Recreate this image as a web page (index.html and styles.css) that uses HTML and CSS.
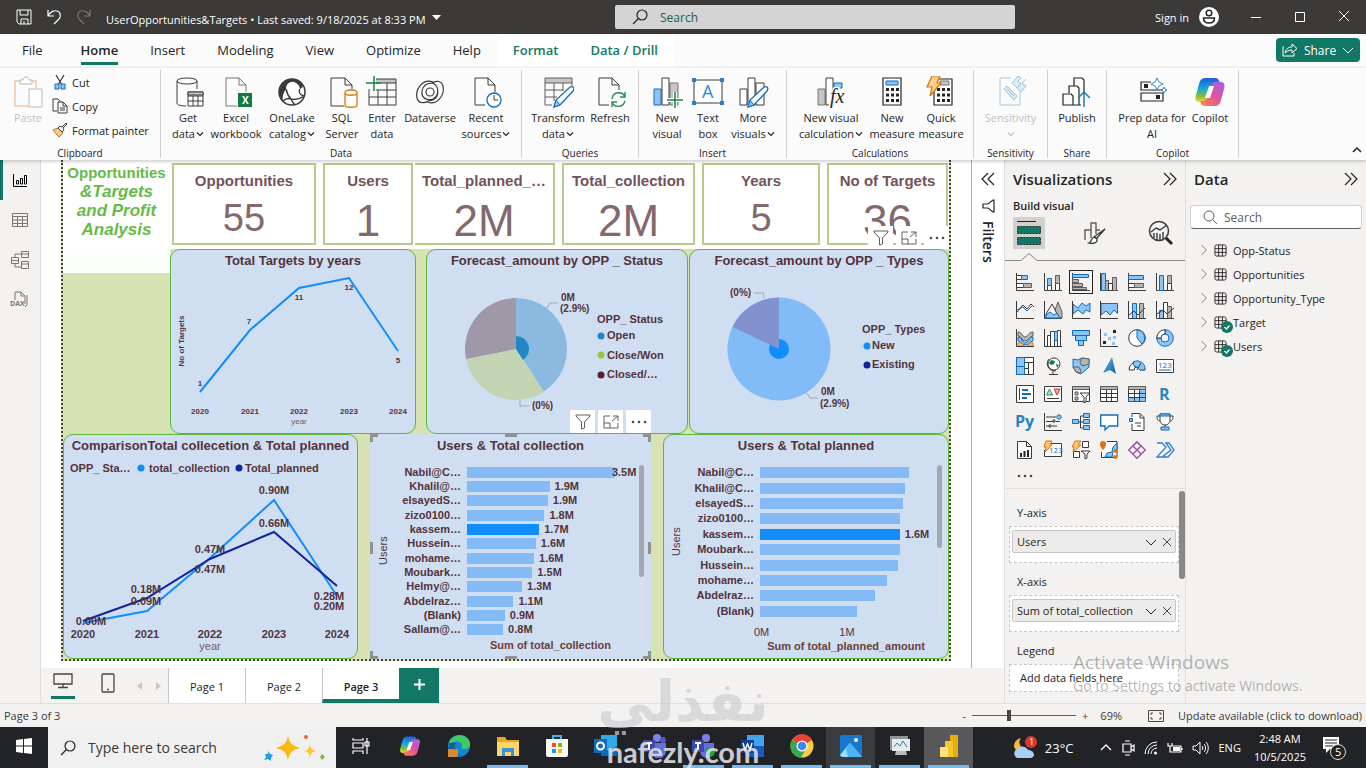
FILE: index.html
```
<!DOCTYPE html>
<html lang="en">
<head>
    <meta charset="UTF-8">
    <meta name="viewport" content="width=device-width, initial-scale=1.0">
    <title>UserOpportunities&amp;Targets</title>
    <link rel="stylesheet" href="styles.css">
</head>
<body>

<!-- shared icons -->
<svg class="symbols" aria-hidden="true">
    <symbol id="chev" viewBox="0 0 8 8"><path d="M1 2.500l3 3 3-3" fill="none" stroke="currentColor" stroke-width="1.200"/></symbol>
    <symbol id="chev-thin" viewBox="0 0 12 12"><path d="M1 4l5 5 5-5" fill="none" stroke="currentColor"/></symbol>
    <symbol id="chev-right" viewBox="0 0 10 14"><path d="M2 1l6 6-6 6" fill="none" stroke="#605e5c"/></symbol>
    <symbol id="double-right" viewBox="0 0 14 14"><path d="M1 1l6 6-6 6M7 1l6 6-6 6" fill="none" stroke="#252423" stroke-width="1.200"/></symbol>
    <symbol id="double-left" viewBox="0 0 14 14"><path d="M7 1L1 7l6 6M13 1L7 7l6 6" fill="none" stroke="#252423" stroke-width="1.200"/></symbol>
    <symbol id="table" viewBox="0 0 14 14"><path d="M3 1h8a2 2 0 012 2v8a2 2 0 01-2 2H3a2 2 0 01-2-2V3a2 2 0 012-2zM5 1v12M9 1v12M1 5h12M1 9h12" fill="none" stroke="#252423"/></symbol>
    <symbol id="check" viewBox="0 0 12 12"><circle cx="6" cy="6" r="6" fill="#117865"/><path d="M3.500 6l2 2 3-3.500" fill="none" stroke="#fff" stroke-width="1.300"/></symbol>
    <symbol id="filter" viewBox="0 0 16 16"><path d="M1 1h14v1L9.500 8v6l-3 1V8L1 2z" fill="none" stroke="#605e5c"/></symbol>
    <symbol id="focus" viewBox="0 0 16 14"><path d="M7 1H1v12h14V8M1 8h6v5M10 1h5v5M15 1L9 6" fill="none" stroke="#605e5c"/></symbol>
    <symbol id="dots" viewBox="0 0 16 4"><circle cx="2" cy="2" r="1.300" fill="#484644"/><circle cx="8" cy="2" r="1.300" fill="#484644"/><circle cx="14" cy="2" r="1.300" fill="#484644"/></symbol>
    <symbol id="copilot" viewBox="0 0 32 32">
        <path d="M12 2h9c3 0 4 2 5 5h-3c-3 0-4 2-5 5l-3 9c-1 3-2 5-5 5H5c-4 0-4-4-3-7l3-11c1-4 3-6 7-6z" fill="url(#cp1)"/>
        <path d="M20 30h-9c-3 0-4-2-5-5h3c3 0 4-2 5-5l3-9c1-3 2-5 5-5h5c4 0 4 4 3 7l-3 11c-1 4-3 6-7 6z" fill="url(#cp2)"/>
        <path d="M15 10h5l-4 12h-5z" fill="#fff"/>
    </symbol>
    <defs>
        <linearGradient id="cp1" x1="0" y1="0" x2="0" y2="1"><stop offset="0" stop-color="#1b5fd9"/><stop offset=".45" stop-color="#18a8d8"/><stop offset=".75" stop-color="#7fbf3d"/><stop offset="1" stop-color="#ffd02f"/></linearGradient>
        <linearGradient id="cp2" x1="1" y1="0" x2="0" y2="1"><stop offset="0" stop-color="#a15cf0"/><stop offset=".5" stop-color="#e0559a"/><stop offset="1" stop-color="#ff8a3c"/></linearGradient>
        <linearGradient id="arrowfill" x1="0" y1="0" x2="1" y2="1"><stop offset="0" stop-color="#5ec2ea"/><stop offset="1" stop-color="#0f5c9c"/></linearGradient>
    </defs>
</svg>

<div class="app">

    <!-- title bar -->
    <header class="titlebar">
        <div class="titlebar-left">
            <button class="tool" aria-label="Save"><svg width="16" height="16" viewBox="0 0 16 16"><path d="M1 1h14v14H3l-2-2zM4 1v5h8V1M5 15v-5h7v5M8 12v3" fill="none" stroke="#fff"/></svg></button>
            <button class="tool" aria-label="Undo"><svg width="16" height="16" viewBox="0 0 16 16"><path d="M2 1v6h6M2 7c2-4 6-6 9-5 4 1 4 6 2 8l-5 5" fill="none" stroke="#fff" stroke-width="1.200"/></svg></button>
            <button class="tool" aria-label="Redo"><svg width="16" height="16" viewBox="0 0 16 16"><path d="M14 1v6H8M14 7c-2-4-6-6-9-5-4 1-4 6-2 8l5 5" fill="none" stroke="#797775" stroke-width="1.200"/></svg></button>
            <button class="file-name">UserOpportunities&amp;Targets • Last saved: 9/18/2025 at 8:33 PM <svg width="9" height="6" viewBox="0 0 9 6"><path d="M0 0h9L4.500 5z" fill="#fff"/></svg></button>
        </div>
        <label class="title-search">
            <svg width="16" height="16" viewBox="0 0 16 16"><circle cx="10" cy="6" r="5" fill="none" stroke="#252423" stroke-width="1.200"/><path d="M6.500 9.500L1 15" stroke="#252423" stroke-width="1.300"/></svg>
            <input type="text" placeholder="Search" aria-label="Search">
        </label>
        <div class="titlebar-right">
            <button class="sign-in">Sign in
                <svg width="20" height="20" viewBox="0 0 20 20"><circle cx="10" cy="10" r="10" fill="#fff"/><circle cx="10" cy="6" r="2.800" fill="none" stroke="#252423" stroke-width="1.500"/><path d="M4.500 11h11c0 3-2 5-5.500 5s-5.500-2-5.500-5z" fill="none" stroke="#252423" stroke-width="1.500"/></svg>
            </button>
            <button class="win-button" aria-label="Minimize"><svg width="10" height="10" viewBox="0 0 10 10"><path d="M0 5.500h10" stroke="#fff"/></svg></button>
            <button class="win-button" aria-label="Maximize"><svg width="10" height="10" viewBox="0 0 10 10"><path d="M.5.5h9v9h-9z" fill="none" stroke="#fff"/></svg></button>
            <button class="win-button" aria-label="Close"><svg width="12" height="12" viewBox="0 0 12 12"><path d="M1 1l10 10M11 1L1 11" stroke="#fff"/></svg></button>
        </div>
    </header>

    <!-- ribbon tabs -->
    <nav class="tabs">
        <a class="tab tab-file" href="#">File</a>
        <a class="tab active" href="#">Home</a>
        <a class="tab" href="#">Insert</a>
        <a class="tab" href="#">Modeling</a>
        <a class="tab" href="#">View</a>
        <a class="tab" href="#">Optimize</a>
        <a class="tab" href="#">Help</a>
        <a class="tab context" href="#">Format</a>
        <a class="tab context" href="#">Data / Drill</a>
        <button class="share"><svg width="16" height="14" viewBox="0 0 16 14"><path d="M2 4H1v9h11v-3M3 10c1-4 3-6 7-6V1l5 4.500L10 10V7c-3 0-5 1-7 3z" fill="none" stroke="#fff"/></svg>Share<svg width="12" height="12"><use href="#chev-thin"/></svg></button>
    </nav>

    <!-- ribbon -->
    <div class="ribbon">
        <section class="group group-clipboard">
            <div class="group-items">
                <button class="rb disabled"><svg width="32" height="32" viewBox="0 0 32 32"><path d="M8 5H3v25h14M20 5h4v7" fill="none" stroke="#f3c9a0" stroke-width="1.500"/><path d="M8 8V4h3c0-4 6-4 6 0h3v4z M17 13h13v18H17z" fill="#fdfdfd" stroke="#bcbab8"/></svg><span>Paste</span></button>
                <div class="rb-list">
                    <button class="rb-row"><svg width="16" height="16" viewBox="0 0 16 16"><path d="M4 1l6 10M12 1L6 11" stroke="#3b3a39" stroke-width="1.300"/><path d="M3 10h4v5H3zM9 10h4v5H9z" fill="#8cc4f5" stroke="#0f6cbd"/></svg>Cut</button>
                    <button class="rb-row"><svg width="16" height="16" viewBox="0 0 16 16"><path d="M5 13H1V1h5l3 3M6 4h5l4 4v7H6zM11 4v4h4M8 10h5M8 12h5" fill="none" stroke="#3b3a39"/></svg>Copy</button>
                    <button class="rb-row"><svg width="16" height="16" viewBox="0 0 16 16"><path d="M1 8l5-2 5 5-4 4z" fill="#f9c88a" stroke="#c8690c"/><path d="M6 6l2-2 2 1 4-4 1 1-4 4 1 2-2 2z" fill="#fff" stroke="#3b3a39"/></svg>Format painter</button>
                </div>
            </div>
            <h2>Clipboard</h2>
        </section>

        <section class="group group-data">
            <div class="group-items">
                <button class="rb"><svg width="32" height="32" viewBox="0 0 32 32"><path d="M5 5c0-4 20-4 20 0v8M5 5c0 4 20 4 20 0M5 5v22c0 2 4 3 9 3" fill="none" stroke="#3b3a39"/><path d="M16 16h15v14H16zM16 20h15M16 25h15M21 20v10M26 20v10" fill="#fff" stroke="#3b3a39"/><path d="M16 16h15v3H16z" fill="#c8c6c4" stroke="#3b3a39"/></svg><span>Get<br>data<svg class="ch"><use href="#chev"/></svg></span></button>
                <button class="rb"><svg width="32" height="32" viewBox="0 0 32 32"><path d="M17 30H6V2h13l7 7v7M19 2v7h7" fill="none" stroke="#797775"/><path d="M18 17h14v14H18z" fill="#107c41"/><text x="22" y="28" font-size="10" font-weight="700" fill="#fff">X</text></svg><span>Excel workbook</span></button>
                <button class="rb"><svg width="32" height="32" viewBox="0 0 32 32"><circle cx="16" cy="16" r="13" fill="#fff" stroke="#3b3a39" stroke-width="1.500"/><path d="M16 3A13 13 0 007 25c-1-4 0-8 3-12 0-5 4-8 8-7 3 1 6 4 6 7 2-1 3-2 3-4A13 13 0 0016 3z" fill="#3b3a39"/><path d="M7 25c2-2 5-3 8-2 5 1 9 0 13-3M10 13c1 5 3 8 5 10M24 13c-2 3 0 6 4 7M15 23c1 2 2 4 4 6" fill="none" stroke="#3b3a39" stroke-width="1.400"/></svg><span>OneLake catalog<svg class="ch"><use href="#chev"/></svg></span></button>
                <button class="rb"><svg width="32" height="32" viewBox="0 0 32 32"><path d="M18 30H5V2h14l7 7v4M19 2v7h7" fill="none" stroke="#3b3a39"/><path d="M19 17c0-4 12-4 12 0v12c0 3-12 3-12 0zM19 17c0 3 12 3 12 0" fill="#fff" stroke="#d8760f" stroke-width="1.300"/></svg><span>SQL Server</span></button>
                <button class="rb"><svg width="32" height="32" viewBox="0 0 32 32"><path d="M10 3h20v4H10z" fill="#c8c6c4"/><path d="M10 3h20v26H3V13M10 7h20M10 14h20M3 21h27M12 14v15M21 7v22" fill="none" stroke="#3b3a39"/><path d="M8 0v15M0 7h15" stroke="#10893e" stroke-width="1.500"/></svg><span>Enter data</span></button>
                <button class="rb"><svg width="32" height="32" viewBox="0 0 32 32"><path d="M19 6C9 2 1 13 3 22c1 5 7 6 11 3M13 26c10 4 18-7 16-16-1-5-7-6-11-3" fill="none" stroke="#3b3a39" stroke-width="1.200"/><circle cx="16" cy="16" r="4" fill="none" stroke="#3b3a39" stroke-width="1.200"/><path d="M18 7c7 2 8 12 1 16-6 2-12-1-11-8 1-5 4-8 10-8M14 25c5 0 9-3 10-8" fill="none" stroke="#3b3a39" stroke-width="1.200"/></svg><span>Dataverse</span></button>
                <button class="rb"><svg width="32" height="32" viewBox="0 0 32 32"><path d="M15 29H5V2h13l7 7v7M18 2v7h7" fill="none" stroke="#3b3a39"/><circle cx="24" cy="24" r="7" fill="#fff" stroke="#0f6cbd" stroke-width="1.300"/><path d="M24 19v5h4" fill="none" stroke="#3b3a39"/></svg><span>Recent sources<svg class="ch"><use href="#chev"/></svg></span></button>
            </div>
            <h2>Data</h2>
        </section>

        <section class="group group-queries">
            <div class="group-items">
                <button class="rb"><svg width="32" height="32" viewBox="0 0 32 32"><path d="M3 2h27v5H3z" fill="#c8c6c4"/><path d="M10 29H3V2h27v8M3 7h27M3 14h18M3 21h12M12 7v18M21 7v8" fill="none" stroke="#605e5c"/><path d="M12 31l2-7 14-13c3-1 5 1 3 4L18 29z" fill="#fff" stroke="#0f6cbd" stroke-width="1.300"/><path d="M12 31l2-7 4 5z" fill="#8cc4f5" stroke="#0f6cbd"/></svg><span>Transform data<svg class="ch"><use href="#chev"/></svg></span></button>
                <button class="rb"><svg width="32" height="32" viewBox="0 0 32 32"><path d="M15 29H5V2h13l7 7v5M18 2v7h7" fill="none" stroke="#3b3a39"/><path d="M18 23c1-8 11-8 13-2M31 16v5h-5M31 25c-2 7-11 7-13 1M18 31v-5h5" fill="none" stroke="#2e8b57" stroke-width="1.400"/></svg><span>Refresh</span></button>
            </div>
            <h2>Queries</h2>
        </section>

        <section class="group group-insert">
            <div class="group-items">
                <button class="rb"><svg width="32" height="32" viewBox="0 0 32 32"><path d="M3 13h7v16H3z" fill="#8cc4f5" stroke="#0f6cbd"/><path d="M19 7h8v22h-8z" fill="#c8c6c4" stroke="#797775"/><path d="M11 2h7v27h-7z" fill="#fff" stroke="#3b3a39"/><path d="M24 16v16M16 24h16" stroke="#fff" stroke-width="4"/><path d="M24 16v16M16 24h16" stroke="#10893e" stroke-width="1.500"/></svg><span>New visual</span></button>
                <button class="rb"><svg width="32" height="32" viewBox="0 0 32 32"><path d="M2 4h28v23H2z" fill="#fff" stroke="#3b3a39"/><path d="M0 2h4v4H0zM28 2h4v4h-4zM0 25h4v4H0zM28 25h4v4h-4z" fill="#2b7cd3"/><text x="10" y="22" font-size="18" fill="#2b88d8">A</text></svg><span>Text box</span></button>
                <button class="rb"><svg width="32" height="32" viewBox="0 0 32 32"><path d="M3 13h7v16H3zM19 7h8v22h-8zM11 2h7v27h-7z" fill="#fff" stroke="#3b3a39"/><path d="M11 31l2-7 14-13c3-1 5 1 3 4L17 29z" fill="#fff" stroke="#0f6cbd" stroke-width="1.300"/><path d="M11 31l2-7 4 5z" fill="#8cc4f5" stroke="#0f6cbd"/></svg><span>More visuals<svg class="ch"><use href="#chev"/></svg></span></button>
            </div>
            <h2>Insert</h2>
        </section>

        <section class="group group-calc">
            <div class="group-items">
                <button class="rb"><svg width="32" height="32" viewBox="0 0 32 32"><path d="M3 13h7v16H3z" fill="#c8c6c4" stroke="#797775"/><path d="M19 7h8v5h-8z" fill="#8cc4f5" stroke="#0f6cbd"/><path d="M11 2h7v27h-7z" fill="#fff" stroke="#3b3a39"/><text class="fx" x="15" y="27" font-size="20" fill="#252423" stroke="#fdfdfd" stroke-width="3" paint-order="stroke">fx</text></svg><span>New visual calculation<svg class="ch"><use href="#chev"/></svg></span></button>
                <button class="rb"><svg width="32" height="32" viewBox="0 0 32 32"><path d="M7 2h18v27H7z" fill="#fff" stroke="#252423" stroke-width="1.200"/><path d="M10 5h12v4H10z" fill="#8cc4f5" stroke="#0f6cbd"/><path d="M10 13.500h13M10 19h13M10 24.500h13" stroke="#252423" stroke-width="3" stroke-dasharray="3 2"/></svg><span>New measure</span></button>
                <button class="rb"><svg width="32" height="32" viewBox="0 0 32 32"><path d="M9 3h18v26H9z" fill="#fff" stroke="#252423" stroke-width="1.200"/><path d="M15 5h9v4h-9z" fill="#c8c6c4" stroke="#797775"/><path d="M12 13.500h13M12 19h13M12 24.500h13" stroke="#252423" stroke-width="3" stroke-dasharray="3 2"/><path d="M7 0h8l-3 7h4L5 20l2-9H2z" fill="#ffd08a" stroke="#d8760f" stroke-width="1.200"/></svg><span>Quick measure</span></button>
            </div>
            <h2>Calculations</h2>
        </section>

        <section class="group group-single">
            <div class="group-items">
                <button class="rb disabled"><svg width="32" height="32" viewBox="0 0 32 32"><path d="M16 2H5v27h20V16" fill="none" stroke="#a9c9df"/><path d="M9 13l3-3 10 10-3 4zM12 13l7 7M17 7l5 5 4-4-3-3 3-3-3-2zM22 12l4 4 5-6-4-3 4-4" fill="#d9ebf7" stroke="#9cc3df"/></svg><span>Sensitivity <svg class="ch"><use href="#chev"/></svg></span></button>
            </div>
            <h2>Sensitivity</h2>
        </section>

        <section class="group group-share">
            <div class="group-items">
                <button class="rb"><svg width="32" height="32" viewBox="0 0 32 32"><path d="M13 10V2h8l2 2v12M8 17v-7h8l2 2v17M2 18h8l2 2v9H2zM12 29h8" fill="none" stroke="#252423" stroke-width="1.200"/><path d="M23 31V16M17 22l6-6 6 6" fill="none" stroke="#1f7fb5" stroke-width="1.500"/></svg><span>Publish</span></button>
            </div>
            <h2>Share</h2>
        </section>

        <section class="group group-copilot">
            <div class="group-items">
                <button class="rb"><svg width="32" height="32" viewBox="0 0 32 32"><path d="M15 6H5v8h22M5 17h22v8H5z" fill="none" stroke="#252423" stroke-width="1.200"/><path d="M8 8h4v4H8zM20 19h4v4h-4z" fill="#252423"/><path d="M21 2l2 4 4 2-4 2-2 4-2-4-4-2 4-2zM28 11l1 2 2 1-2 1-1 2-1-2-2-1 2-1z" fill="#fff" stroke="#2b88d8"/></svg><span>Prep data for AI</span></button>
                <button class="rb"><svg width="32" height="32"><use href="#copilot"/></svg><span>Copilot</span></button>
            </div>
            <h2>Copilot</h2>
        </section>
        <button class="collapse" aria-label="Collapse ribbon"><svg width="10" height="6" viewBox="0 0 10 6"><path d="M1 5l4-4 4 4" fill="none" stroke="#252423" stroke-width="1.500"/></svg></button>
    </div>

    <main class="main">
        <!-- view switch -->
        <nav class="views">
            <a class="view active" href="#" aria-label="Report view"><svg width="16" height="16" viewBox="0 0 16 16"><path d="M1.500 2v12.500H15M4.500 12V8.500h2V12zM8.500 12V6.500h2V12zM12.500 12V3.500h2V12z" fill="none" stroke="#000"/></svg></a>
            <a class="view" href="#" aria-label="Table view"><svg width="16" height="16" viewBox="0 0 16 16"><path d="M.5 1.500h15v13H.5zM.5 4.500h15M.5 8h15M.5 11.500h15M5.500 4.500v10M10.500 4.500v10" fill="none" stroke="#797775"/></svg></a>
            <a class="view" href="#" aria-label="Model view"><svg width="18" height="18" viewBox="0 0 18 18"><path d="M.5 6.500h7v6h-7zM.5 9.500h7M10.500.5h7v6h-7zM10.500 3h7M10.500 10.500h7v7h-7zM10.500 13h7M4 6V3h6M4 12v4h6" fill="none" stroke="#797775"/></svg></a>
            <a class="view" href="#" aria-label="DAX query view"><svg width="20" height="18" viewBox="0 0 20 18"><path d="M5 9V1h6l4 4v8M11 1v4h4M17 4v10l-2 2" fill="none" stroke="#797775"/><text x="0" y="15" font-size="7" font-weight="700" fill="#797775">DAX</text></svg></a>
        </nav>

        <div class="work">
            <div class="stage">
                <div class="canvas">
                    <div class="page">
                        <div class="row row-cards">
                            <h1 class="report-title"><span>Opportunities</span> &amp;Targets and Profit Analysis</h1>
                            <article class="card w-144"><h3>Opportunities</h3><p class="small">55</p></article>
                            <article class="card w-90"><h3>Users</h3><p>1</p></article>
                            <article class="card w-140 joined"><h3>Total_planned_…</h3><p>2M</p></article>
                            <article class="card w-133"><h3>Total_collection</h3><p>2M</p></article>
                            <article class="card w-118"><h3>Years</h3><p class="small">5</p></article>
                            <article class="card w-121"><h3>No of Targets</h3><p>36</p></article>
                            <div class="visual-tools">
                                <button aria-label="Filters"><svg width="16" height="16"><use href="#filter"/></svg></button>
                                <button aria-label="Focus mode"><svg width="16" height="14"><use href="#focus"/></svg></button>
                                <button aria-label="More options"><svg width="16" height="4"><use href="#dots"/></svg></button>
                            </div>
                        </div>

                        <div class="row row-middle">
                            <div class="side"></div>
                            <article class="visual w-246">
                                <h3>Total Targets by years</h3>
                                <svg class="plot" viewBox="171 272 244 160">
                                    <g class="t8 bold">
                                        <text class="axis" transform="translate(184 341) rotate(-90)">No of Targets</text>
                                        <text x="200" y="386">1</text><text x="249" y="324">7</text><text x="299" y="300">11</text><text x="349" y="290">12</text><text x="398" y="363">5</text>
                                        <text x="200" y="414">2020</text><text x="250" y="414">2021</text><text x="299" y="414">2022</text><text x="349" y="414">2023</text><text x="398" y="414">2024</text>
                                    </g>
                                    <text class="t8 soft" x="299" y="424">year</text>
                                    <path d="M200 392L250 330 299 288 349 278 398 351" fill="none" stroke="#118dff" stroke-width="2"/>
                                </svg>
                            </article>
                            <article class="visual w-262 after-gap">
                                <h3>Forecast_amount by OPP _ Status</h3>
                                <svg class="plot" viewBox="427 272 260 160">
                                    <path d="M516 349V298A51 51 0 01543.800 391.800z" fill="#8bb9df"/>
                                    <path d="M516 349L543.800 391.800A51 51 0 01466 359z" fill="#c3d4b3"/>
                                    <path d="M516 349L466 359A51 51 0 01516 298z" fill="#9f98a7"/>
                                    <path d="M516 349v-13A13 13 0 01523 360z" fill="#2287c6"/>
                                    <path d="M547 308l3-5h8M520 400v6h9" fill="none" stroke="#a9a7a6"/>
                                    <g class="t10 bold left"><text x="561" y="301">0M</text><text x="560" y="312">(2.9%)</text><text x="532" y="409">(0%)</text></g>
                                    <g class="t11 bold left"><text x="597" y="323">OPP_ Status</text><text x="607" y="339">Open</text><text x="607" y="359">Close/Won</text><text x="607" y="378">Closed/…</text></g>
                                    <circle cx="601" cy="336" r="3.500" fill="#2287c6"/><circle cx="601" cy="355" r="3.500" fill="#9bc53d"/><circle cx="601" cy="375" r="3.500" fill="#53222b"/>
                                </svg>
                                <div class="visual-tools">
                                    <button aria-label="Filters"><svg width="16" height="16"><use href="#filter"/></svg></button>
                                    <button aria-label="Focus mode"><svg width="16" height="14"><use href="#focus"/></svg></button>
                                    <button aria-label="More options"><svg width="16" height="4"><use href="#dots"/></svg></button>
                                </div>
                            </article>
                            <article class="visual w-260 after-line">
                                <h3>Forecast_amount by OPP _ Types</h3>
                                <svg class="plot" viewBox="690 272 258 160">
                                    <circle cx="779" cy="349" r="51.500" fill="#81bbf8"/>
                                    <circle cx="779" cy="349" r="10" fill="#118dff"/>
                                    <path d="M779 349L732.500 327A51.500 51.500 0 01779 297.500z" fill="#8292cf"/>
                                    <path d="M754 293h9l1 5M807 393l3 5h8" fill="none" stroke="#a9a7a6"/>
                                    <g class="t10 bold left"><text x="730" y="296">(0%)</text><text x="821" y="395">0M</text><text x="820" y="407">(2.9%)</text></g>
                                    <g class="t11 bold left"><text x="862" y="333">OPP_ Types</text><text x="872" y="349">New</text><text x="872" y="368">Existing</text></g>
                                    <circle cx="867" cy="346" r="3.500" fill="#118dff"/><circle cx="867" cy="365" r="3.500" fill="#12239e"/>
                                </svg>
                            </article>
                        </div>

                        <div class="row row-bottom">
                            <article class="visual w-295">
                                <h3>ComparisonTotal collecetion &amp; Total planned</h3>
                                <svg class="plot" viewBox="64 457 293 201">
                                    <g class="t11 bold left"><text x="70" y="472">OPP_ Sta…</text><text x="149" y="472">total_collection</text><text x="245" y="472">Total_planned</text></g>
                                    <circle cx="141" cy="468" r="3.500" fill="#118dff"/><circle cx="239" cy="468" r="3.500" fill="#12239e"/>
                                    <path d="M83 623L147 611 210 558 274 500 337 596" fill="none" stroke="#118dff" stroke-width="2"/>
                                    <path d="M83 621L147 598 210 559 274 532 337 586" fill="none" stroke="#12239e" stroke-width="2"/>
                                    <g class="t11 bold">
                                        <text x="91" y="625">0.00M</text><text x="146" y="593">0.18M</text><text x="146" y="605">0.09M</text><text x="210" y="553">0.47M</text><text x="210" y="573">0.47M</text><text x="274" y="494">0.90M</text><text x="274" y="527">0.66M</text><text x="329" y="600">0.28M</text><text x="329" y="610">0.20M</text>
                                        <text x="83" y="638">2020</text><text x="147" y="638">2021</text><text x="210" y="638">2022</text><text x="274" y="638">2023</text><text x="337" y="638">2024</text>
                                    </g>
                                    <text class="t11 soft" x="210" y="650">year</text>
                                </svg>
                            </article>

                            <article class="visual selected w-281">
                                <h3>Users &amp; Total collection</h3>
                                <div class="bars">
                                    <span class="y-title">Users</span>
                                    <ul class="bar-list">
                                        <li><span>Nabil@C…</span><i style="width: 86%"><b class="over">3.5M</b></i></li>
                                        <li><span>Khalil@…</span><i style="width: 48%"><b>1.9M</b></i></li>
                                        <li><span>elsayedS…</span><i style="width: 47%"><b>1.9M</b></i></li>
                                        <li><span>zizo0100…</span><i style="width: 45%"><b>1.8M</b></i></li>
                                        <li><span>kassem…</span><i class="on" style="width: 42%"><b>1.7M</b></i></li>
                                        <li><span>Hussein…</span><i style="width: 40%"><b>1.6M</b></i></li>
                                        <li><span>mohame…</span><i style="width: 39%"><b>1.6M</b></i></li>
                                        <li><span>Moubark…</span><i style="width: 38%"><b>1.5M</b></i></li>
                                        <li><span>Helmy@…</span><i style="width: 32%"><b>1.3M</b></i></li>
                                        <li><span>Abdelraz…</span><i style="width: 27%"><b>1.1M</b></i></li>
                                        <li><span>(Blank)</span><i style="width: 22%"><b>0.9M</b></i></li>
                                        <li><span>Sallam@…</span><i style="width: 21%"><b>0.8M</b></i></li>
                                    </ul>
                                    <span class="scroll"><span class="scroll-thumb"></span></span>
                                </div>
                                <p class="x-title">Sum of total_collection</p>
                                <span class="handle tl"></span><span class="handle tr"></span><span class="handle bl"></span><span class="handle br"></span>
                                <span class="grip top"></span><span class="grip bottom"></span><span class="grip left-side"></span><span class="grip right-side"></span>
                            </article>

                            <article class="visual w-286">
                                <h3>Users &amp; Total planned</h3>
                                <div class="bars planned">
                                    <span class="y-title">Users</span>
                                    <ul class="bar-list">
                                        <li><span>Nabil@C…</span><i style="width: 84%"></i></li>
                                        <li><span>Khalil@C…</span><i style="width: 82%"></i></li>
                                        <li><span>elsayedS…</span><i style="width: 81%"></i></li>
                                        <li><span>zizo0100…</span><i style="width: 79%"></i></li>
                                        <li><span>kassem…</span><i class="on" style="width: 79%"><b>1.6M</b></i></li>
                                        <li><span>Moubark…</span><i style="width: 79%"></i></li>
                                        <li><span>Hussein…</span><i style="width: 78%"></i></li>
                                        <li><span>mohame…</span><i style="width: 72%"></i></li>
                                        <li><span>Abdelraz…</span><i style="width: 65%"></i></li>
                                        <li><span>(Blank)</span><i style="width: 55%"></i></li>
                                    </ul>
                                    <span class="scroll"><span class="scroll-thumb"></span></span>
                                </div>
                                <p class="ticks"><span>0M</span><span>1M</span></p>
                                <p class="x-title">Sum of total_planned_amount</p>
                            </article>
                        </div>
                    </div>
                </div>

                <aside class="filters">
                    <svg width="14" height="14"><use href="#double-left"/></svg>
                    <svg width="14" height="14" viewBox="0 0 14 14"><path d="M13 1v12h-1L7 9H2V5h5l5-4z" fill="none" stroke="#252423" stroke-width="1.200"/></svg>
                    <h2>Filters</h2>
                </aside>
            </div>

            <!-- page tabs -->
            <nav class="pages">
                <button class="layout on" aria-label="Desktop layout"><svg width="20" height="16" viewBox="0 0 20 16"><path d="M1 1h18v10H1zM10 11v3M5 14.500h10" fill="none" stroke="#484644" stroke-width="1.300"/></svg></button>
                <button class="layout" aria-label="Mobile layout"><svg width="14" height="20" viewBox="0 0 14 20"><rect x="1" y="1" width="12" height="18" rx="1" fill="none" stroke="#484644" stroke-width="1.300"/><path d="M6 16.500h2" stroke="#484644" stroke-width="1.300"/></svg></button>
                <button class="arrow" aria-label="Previous page"><svg width="5" height="8" viewBox="0 0 5 8"><path d="M5 0v8L0 4z" fill="#c8c6c4"/></svg></button>
                <button class="arrow" aria-label="Next page"><svg width="5" height="8" viewBox="0 0 5 8"><path d="M0 0v8l5-4z" fill="#c8c6c4"/></svg></button>
                <a class="page-tab" href="#">Page 1</a>
                <a class="page-tab" href="#">Page 2</a>
                <a class="page-tab current" href="#">Page 3</a>
                <button class="add-page" aria-label="New page"><svg width="11" height="11" viewBox="0 0 11 11"><path d="M5.500 0v11M0 5.500h11" stroke="#fff" stroke-width="2"/></svg></button>
            </nav>
        </div>

        <!-- visualizations pane -->
        <aside class="pane viz">
            <header><h2>Visualizations</h2><svg width="14" height="14"><use href="#double-right"/></svg></header>
            <h3>Build visual</h3>
            <div class="modes">
                <button class="mode on" aria-label="Build visual"><svg width="26" height="26" viewBox="0 0 26 26"><path d="M1 1.500h19" stroke="#252423"/><path d="M1.500 6.500h23v7h-23zM1.500 17.500h23v7h-23z" fill="#117865" stroke="#252423" stroke-dasharray="2 1"/></svg></button>
                <button class="mode" aria-label="Format visual"><svg width="24" height="24" viewBox="0 0 24 24"><path d="M2 19V9h6v8M8 15V2h5v11M13 9h4" fill="none" stroke="#605e5c" stroke-width="1.400"/><path d="M22 8l-8 9-3-1zM11 16l3 2c1 4-4 5-8 4 3-1 2-5 5-6z" fill="#fff" stroke="#3b3a39" stroke-width="1.300"/></svg></button>
                <button class="mode" aria-label="Analytics"><svg width="26" height="26" viewBox="0 0 26 26"><circle cx="11" cy="11" r="9.500" fill="none" stroke="#3b3a39" stroke-width="1.500"/><path d="M3 12l5-4 4 2 7-5M6 18v-5M9 20v-7M12 20v-6M15 19v-7" fill="none" stroke="#3b3a39" stroke-width="1.400"/><path d="M18 18l6 6" stroke="#252423" stroke-width="3"/></svg></button>
            </div>
            <svg class="notch" viewBox="0 0 180 8" height="8"><path d="M0 7.500h16l8-7 8 7h148" fill="none" stroke="#8a8886"/></svg>
            <div class="viz-grid">
                <button><svg viewBox="0 0 18 18"><path d="M.5 0v17.500H18" class="d"/><path d="M.5 2.500h5v4h-5z" class="w"/><path d="M5.500 2.500h6v4h-6z" class="b"/><path d="M.5 10.500h7v4h-7z" class="w"/><path d="M7.500 10.500h8v4h-8z" class="g"/></svg></button>
                <button><svg viewBox="0 0 18 18"><path d="M.5 0v17.500H18" class="d"/><path d="M3.500 12.500h4v5h-4zM11.500 10.500h4v7h-4z" class="w"/><path d="M3.500 5.500h4v7h-4z" class="b"/><path d="M11.500 2.500h4v8h-4z" class="g"/></svg></button>
                <button class="picked"><svg viewBox="0 0 18 18"><path d="M.5 0v17.500H18" class="d"/><path d="M.5 1.500h16v3H.5z" class="b"/><path d="M.5 6.500h6v3h-6zM.5 10.500h10v3H.5zM.5 14.500h14v2H.5z" class="g"/></svg></button>
                <button><svg viewBox="0 0 18 18"><path d="M.5 0v17.500H18" class="d"/><path d="M1.500.5h4v17h-4z" class="b"/><path d="M5.500 7.500h3v10h-3zM12.500 4.500h4v13h-4z" class="g"/><path d="M8.500 10.500h4v7h-4z" class="w"/></svg></button>
                <button><svg viewBox="0 0 18 18"><path d="M.5 0v17.500H18" class="d"/><path d="M.5 2.500h15v4H.5z" class="b"/><path d="M.5 10.500h6v4h-6z" class="w"/><path d="M6.500 10.500h9v4h-9z" class="g"/></svg></button>
                <button><svg viewBox="0 0 18 18"><path d="M.5 0v17.500H18" class="d"/><path d="M3.500 2.500h4v15h-4z" class="b"/><path d="M11.500 2.500h4v8h-4z" class="g"/><path d="M11.500 10.500h4v7h-4z" class="w"/></svg></button>

                <button><svg viewBox="0 0 18 18"><path d="M.5 0v17.500H18M1 11l6-7 4 4 4-5 3 3" class="d"/><path d="M1 9l6-3 4 4 6-6" class="l"/></svg></button>
                <button><svg viewBox="0 0 18 18"><path d="M.5 0v17.500H18" class="d"/><path d="M8 17l6-16 4 10v6z" class="g"/><path d="M2 13l6-10 7 14H2z" class="w"/><path d="M2 14l4-3 4 3 3-2 3 5H2z" class="b"/></svg></button>
                <button><svg viewBox="0 0 18 18"><path d="M1 3l5 4 4-5 4 3 4-3v9l-4-2-3 4-5-4-5 4z" class="b"/><path d="M.5 0v17.500H18" class="d"/></svg></button>
                <button><svg viewBox="0 0 18 18"><path d="M1 2.500h16.500v10L14 9l-4 5-4-4-5 4z" class="b"/><path d="M.5 0v17.500H18" class="d"/></svg></button>
                <button><svg viewBox="0 0 18 18"><path d="M4.500 2.500h4v15h-4z" class="b"/><path d="M11.500 2.500h4v15h-4z" class="g"/><path d="M.5 0v17.500H18M1 14l5-4 4 4 7-7" class="d"/></svg></button>
                <button><svg viewBox="0 0 18 18"><path d="M3.500 9.500h4v8h-4z" class="b"/><path d="M7.500 1.500h4v16h-4z" class="w"/><path d="M11.500 5.500h4v12h-4z" class="g"/><path d="M.5 0v17.500H18M1 13l6-4 4 4 7-6" class="d"/></svg></button>

                <button><svg viewBox="0 0 18 18"><path d="M2 3c5 0 4 5 7 5s3-5 8-5v4c-4 0-4 5-8 5S6 7 2 7z" class="g"/><path d="M2 8c4 0 4 6 7 6s4-6 8-6v4c-3 0-4 4-8 4s-4-4-7-4z" class="b"/><path d="M2 14h4l2 3H2zM13 14h4v3h-5z" class="o"/><path d="M.5 0v17.500H18" class="d"/></svg></button>
                <button><svg viewBox="0 0 18 18"><path d="M3.500 6.500h3v11h-3zM6.500 2.500h4v15h-4zM13.500 1.500h3v16h-3z" class="w"/><path d="M10.500 2.500h3v9h-3z" class="b"/><path d="M.5 0v17.500H18" class="d"/></svg></button>
                <button><svg viewBox="0 0 18 18"><path d="M.5 1.500h17v5H.5zM3.500 6.500h11v5h-11zM6.500 11.500h5v5h-5z" class="b"/></svg></button>
                <button><svg viewBox="0 0 18 18"><path d="M.5 0v17.500H18" class="d"/><path d="M4 4h3v3H4zM8 8h3v3H8zM13 7h3v3h-3zM12 13h3v3h-3z" fill="#8cc4f5"/><path d="M13 1h3v3h-3zM3 12h3v3H3z" fill="#252423"/></svg></button>
                <button><svg viewBox="0 0 18 18"><circle cx="9" cy="9" r="8.300" class="w"/><path d="M9 9V1a8 8 0 015 14z" class="b"/></svg></button>
                <button><svg viewBox="0 0 18 18"><path d="M9 .7A8.300 8.300 0 11.700 9H5a4 4 0 104-4z" class="b"/><path d="M.7 9A8.300 8.300 0 019 .7V5a4 4 0 00-4 4z" class="w"/></svg></button>

                <button><svg viewBox="0 0 18 18"><path d="M.5.5h17v17H.5z" class="w"/><path d="M.5.5h8v9h-8zM.5 9.500h8v8h-8z" class="b"/><path d="M8.500 5.500h9M12.500 5.500v12M8.500 11.500h4" class="d"/></svg></button>
                <button><svg viewBox="0 0 18 18"><circle cx="10" cy="7" r="6" class="w"/><path d="M7 3l4 1-1 3-3 1-2-2zM12 7l3 1-2 3z" fill="#107c41"/><path d="M5 2C1 7 4 14 12 14M9 14v3M5 17.500h9" class="d"/></svg></button>
                <button><svg viewBox="0 0 18 18"><path d="M1 2l5 1 4-2 7 1v8l-8 7-5-2-3-5z" class="b"/><path d="M10 1l7 1v5l-7 2-2-4zM1 10l6 0 2 4-1 2-4-1z" class="g"/></svg></button>
                <button><svg viewBox="0 0 18 18"><path d="M12 0l4 17-6-4-7 3z" fill="url(#arrowfill)"/></svg></button>
                <button><svg viewBox="0 0 18 18"><path d="M1 13a8 8 0 0116 0h-5a3 3 0 00-6 0z" class="w"/><path d="M5 5a8 8 0 0112 8h-5l-3-3-3-1z" class="b"/><path d="M9 13l4-7" class="d"/></svg></button>
                <button><svg viewBox="0 0 18 18"><path d="M.5 2.500h17v13H.5z" class="w"/><text x="2" y="11" font-size="8" fill="#0f6cbd">123</text><path d="M3 13h12" class="l"/></svg></button>

                <button><svg viewBox="0 0 18 18"><path d="M.5.5h17v17H.5z" class="w"/><path d="M3.500 3v12" class="d"/><path d="M6 5h6M6 9h9M6 13h5" stroke="#0f6cbd" stroke-width="2"/></svg></button>
                <button><svg viewBox="0 0 18 18"><path d="M.5 1.500h17v15H.5zM3 13.500h12" class="w"/><path d="M2.500 10l3-6 3 6z" fill="#b8e0c2" stroke="#2e8b57"/><path d="M10 4h6l-3 6z" fill="#f5a3a3" stroke="#d13438"/></svg></button>
                <button><svg viewBox="0 0 18 18"><path d="M.5 1.500h17v15H.5z" class="w"/><path d="M.5 1.500h17v3H.5zM3 7h3v3H3zM3 12h3v3H3z" class="g"/><path d="M8 8h9.500l-3.500 4v5l-2 1v-6z" class="w"/></svg></button>
                <button><svg viewBox="0 0 18 18"><path d="M.5 1.500h17v15H.5z" class="w"/><path d="M.5 1.500h17v3H.5z" class="g"/><path d="M.5 8.500h17M.5 12.500h17M6.500 4.500v12M11.500 4.500v12" class="d"/></svg></button>
                <button><svg viewBox="0 0 18 18"><path d="M.5 1.500h17v15H.5z" class="w"/><path d="M11.500 4.500h6v12H.5v-4h11z" class="b"/><path d="M.5 1.500h17v3H.5z" class="g"/><path d="M.5 8.500h17M.5 12.500h17M6.500 4.500v12M11.500 4.500v12" class="d"/></svg></button>
                <button><svg viewBox="0 0 18 18"><text x="3" y="15" font-size="16" font-weight="700" fill="#2a84c0">R</text></svg></button>

                <button><svg viewBox="0 0 18 18"><text x="-1" y="14" font-size="16" font-weight="700" fill="#2a84c0">Py</text></svg></button>
                <button><svg viewBox="0 0 18 18"><path d="M.5 0v17.500H18M2 4h10M2 8.500h7M2 13h4M12 8.500h4M8 13h5" class="d"/><circle cx="15" cy="4" r="2.200" class="b"/><path d="M9 7h2v2H9zM5 12h2v2H5z" class="w"/></svg></button>
                <button><svg viewBox="0 0 18 18"><path d="M6 9h5M8.500 3v12h3M8.500 3h3" class="d"/><path d="M.5 6.500h6v4h-6zM11.500.5h6v4h-6zM11.500 6.500h6v4h-6zM11.500 12.500h6v4h-6z" class="b"/></svg></button>
                <button><svg viewBox="0 0 18 18"><path d="M.7 2h17v11H9l-4 4v-4H.7z" fill="#fff" stroke="#0f6cbd" stroke-width="1.300"/></svg></button>
                <button><svg viewBox="0 0 18 18"><path d="M4 4V.5h8l4 4v13H4V11M12 1v4h4M7 10h6M9 13h4" class="w"/><path d="M1.500 5.500h3v3h-3z" class="b"/></svg></button>
                <button><svg viewBox="0 0 18 18"><path d="M4 1h10v5c0 4-2 6-5 6S4 10 4 6zM4 3H1c0 4 1 5 3 5M14 3h3c0 4-1 5-3 5M9 12v4" class="w"/><path d="M4 1h10v2H4zM5 14h8v3H5z" class="b"/></svg></button>

                <button><svg viewBox="0 0 18 18"><path d="M1.500.5h9l5 5v12h-14zM10.500.5v5h5" class="w"/><path d="M5 16v-4M8.500 16v-6M12 16v-7" stroke="#252423" stroke-width="2"/></svg></button>
                <button><svg viewBox="0 0 18 18"><path d="M3 2.500h14.500v13H.5V9" class="w"/><text x="5" y="12" font-size="8" fill="#0f6cbd">123</text><path d="M2 0h6L6 4h2L1 11l1-5H0z" class="o"/></svg></button>
                <button><svg viewBox="0 0 18 18"><path d="M10.500.5h6v6h-6zM1.500 10.500h6v6h-6z" class="w"/><path d="M9 10h9l-3 3v4l-2 1v-5z" class="w"/><path d="M3 0h6L6 4h3L1 11l1-5H0z" class="o"/></svg></button>
                <button><svg viewBox="0 0 18 18"><path d="M7 .5h10v16H1.500V11" class="w"/><path d="M5 16l2-4 5-1 1-5 4-4v6l-4 3-1 5z" class="b"/><path d="M0 3a3 3 0 016 0c0 3-3 6-3 6S0 6 0 3z" fill="#d8760f"/><circle cx="16" cy="10" r="2" fill="#d8760f"/><circle cx="15" cy="16" r="2" fill="#d8760f"/></svg></button>
                <button><svg viewBox="0 0 18 18"><path d="M9 .7L17.300 9 9 17.300.7 9zM5 5l8 8M13 5l-8 8M9 1l4 4-4 4-4-4z" fill="none" stroke="#9b4aa8" stroke-width="1.300"/></svg></button>
                <button><svg viewBox="0 0 18 18"><path d="M1 2h5l4 4-9 10h5l9-7-5-7h3l5 7-6 7H7" fill="#fff" stroke="#2b7cd3" stroke-width="1.300"/></svg></button>
            </div>
            <button class="more" aria-label="More visuals"><svg width="16" height="4"><use href="#dots"/></svg></button>
            <div class="wells">
                <div class="well-list">
                    <h4>Y-axis</h4>
                    <div class="well"><div class="pill">Users<svg width="12" height="12"><use href="#chev-thin"/></svg><svg width="8" height="8" viewBox="0 0 8 8"><path d="M0 0l8 8M8 0L0 8" stroke="#484644"/></svg></div></div>
                    <h4>X-axis</h4>
                    <div class="well"><div class="pill">Sum of total_collection<svg width="12" height="12"><use href="#chev-thin"/></svg><svg width="8" height="8" viewBox="0 0 8 8"><path d="M0 0l8 8M8 0L0 8" stroke="#484644"/></svg></div></div>
                    <h4>Legend</h4>
                    <div class="well empty">Add data fields here</div>
                </div>
                <span class="wells-thumb"></span>
            </div>
        </aside>

        <!-- data pane -->
        <aside class="pane data">
            <header><h2>Data</h2><svg width="14" height="14"><use href="#double-right"/></svg></header>
            <label class="data-search">
                <svg width="15" height="15" viewBox="0 0 15 15"><circle cx="6" cy="6" r="5" fill="none" stroke="#605e5c"/><path d="M9.500 9.500L14 14" stroke="#605e5c"/></svg>
                <input type="text" placeholder="Search" aria-label="Search fields">
            </label>
            <ul class="fields">
                <li><svg width="8" height="14"><use href="#chev-right"/></svg><svg width="13" height="13"><use href="#table"/></svg>Opp-Status</li>
                <li><svg width="8" height="14"><use href="#chev-right"/></svg><svg width="13" height="13"><use href="#table"/></svg>Opportunities</li>
                <li><svg width="8" height="14"><use href="#chev-right"/></svg><svg width="13" height="13"><use href="#table"/></svg>Opportunity_Type</li>
                <li><svg width="8" height="14"><use href="#chev-right"/></svg><svg width="13" height="13"><use href="#table"/></svg><svg class="badge" width="12" height="12"><use href="#check"/></svg>Target</li>
                <li><svg width="8" height="14"><use href="#chev-right"/></svg><svg width="13" height="13"><use href="#table"/></svg><svg class="badge" width="12" height="12"><use href="#check"/></svg>Users</li>
            </ul>
        </aside>
    </main>

    <footer class="status">
        <span>Page 3 of 3</span>
        <div class="zoom">
            <button aria-label="Zoom out">-</button>
            <input type="range" min="10" max="178" value="69" aria-label="Zoom">
            <button aria-label="Zoom in">+</button>
            <span class="percent">69%</span>
            <svg width="16" height="12" viewBox="0 0 16 12"><path d="M.5.5h15v11H.5z" fill="none" stroke="#484644"/><path d="M3 5V3h2M11 3h2v2M13 7v2h-2M5 9H3V7" fill="none" stroke="#484644"/></svg>
            <a href="#">Update available (click to download)</a>
        </div>
    </footer>

    <!-- windows taskbar -->
    <footer class="taskbar">
        <button class="start" aria-label="Start"><svg width="16" height="16" viewBox="0 0 16 16"><path d="M0 2l7-1v6.500H0zM8 1l8-1v7.500H8zM0 8.500h7V15l-7-1zM8 8.500h8V16l-8-1z" fill="#fff"/></svg></button>
        <label class="task-search">
            <svg width="16" height="16" viewBox="0 0 16 16"><circle cx="10" cy="6" r="5" fill="none" stroke="#252423" stroke-width="1.200"/><path d="M6.500 9.500L1 15" stroke="#252423" stroke-width="1.300"/></svg>
            <input type="text" placeholder="Type here to search" aria-label="Type here to search">
            <svg width="62" height="26" viewBox="0 0 62 26"><path d="M24 1c2 8 4 9 12 12-8 2-10 4-12 12-2-8-4-10-12-12 8-3 10-4 12-12z" fill="#fdb813"/><path d="M46 9c1 5 2 6 6 7-4 1-5 2-6 7-1-5-2-6-6-7 4-1 5-2 6-7z" fill="#fdc52f"/><path d="M4 16l2 3 3 1-2 3v3l-3-2-4 1 2-3-1-3 3 0z" fill="#1aa0e0"/><circle cx="42" cy="2" r="2" fill="#e8662a"/><path d="M58 19l3 3-3 3-2-3z" fill="#7cb342"/></svg>
        </label>
        <div class="apps">
            <button class="app-icon" aria-label="Task view"><svg width="18" height="16" viewBox="0 0 18 16"><path d="M1 0v2h10V0M1 16v-3h10v3M1 5h10v5H1zM15 0v16M13 4h4v4h-4z" fill="none" stroke="#fff" stroke-width="1.200"/></svg></button>
            <button class="app-icon" aria-label="Copilot"><svg width="22" height="22"><use href="#copilot"/></svg></button>
            <button class="app-icon" aria-label="Edge"><svg width="24" height="24" viewBox="0 0 24 24"><circle cx="12" cy="12" r="11" fill="#1286d3"/><path d="M2 8C6-1 21-1 23 9c1 6-5 7-9 5 3-4-2-8-7-6-3 1-5 2-5 0z" fill="#42c86b"/><path d="M9 9c-4 5-1 12 6 13-8 3-14-3-13-11 1-2 4-3 7-2z" fill="#0b5ba6"/><path d="M1 15h10v8H1z" fill="#d98a2b"/><path d="M4 13h4v3" fill="none" stroke="#8a4f12"/></svg></button>
            <button class="app-icon running" aria-label="File Explorer"><svg width="24" height="22" viewBox="0 0 24 22"><path d="M1 2h8l2 3h12v16H1z" fill="#e9a820"/><path d="M1 7h22v14H1z" fill="#ffd768"/><path d="M6 21v-8h12v8h-3v-4H9v4z" fill="#3a93dd"/></svg></button>
            <button class="app-icon" aria-label="Store"><svg width="24" height="24" viewBox="0 0 24 24"><path d="M8 5V2h8v3" fill="none" stroke="#35b5e8" stroke-width="2"/><path d="M1 5h22v16a2 2 0 01-2 2H3a2 2 0 01-2-2z" fill="#f8f8f8"/><path d="M7 9h4v4H7z" fill="#f25022"/><path d="M13 9h4v4h-4z" fill="#7fba00"/><path d="M7 15h4v4H7z" fill="#00a4ef"/><path d="M13 15h4v4h-4z" fill="#ffb900"/></svg></button>
            <button class="app-icon" aria-label="Outlook"><svg width="24" height="24" viewBox="0 0 24 24"><path d="M7 1h16v18H7z" fill="#35a8e8"/><path d="M7 12l8 5 8-5v10H7z" fill="#1366b8"/><path d="M0 5h13v14H0z" fill="#0f6cbd"/><circle cx="6.500" cy="12" r="3.500" fill="none" stroke="#fff" stroke-width="2"/></svg></button>
            <button class="app-icon" aria-label="Teams"><svg width="24" height="24" viewBox="0 0 24 24"><circle cx="14" cy="4" r="4" fill="#7b83eb"/><circle cx="20" cy="6" r="3" fill="#5059c9"/><path d="M8 9h15v8a7 7 0 01-15 0z" fill="#6670dc"/><path d="M0 6h12v12H0z" fill="#4048ae"/><path d="M3 9h6M6 9v7" stroke="#fff" stroke-width="2"/></svg></button>
            <button class="app-icon running" aria-label="Teams meeting"><svg width="24" height="24" viewBox="0 0 24 24"><circle cx="14" cy="4" r="4" fill="#7b83eb"/><path d="M8 9h14v8a7 7 0 01-14 0z" fill="#6670dc"/><path d="M0 6h12v12H0z" fill="#4048ae"/><path d="M3 9h6M6 9v7" stroke="#fff" stroke-width="2"/><circle cx="18" cy="18" r="5" fill="#16a34a"/></svg></button>
            <button class="app-icon running" aria-label="Word"><svg width="24" height="24" viewBox="0 0 24 24"><path d="M6 1h17v22H6z" fill="#41a5ee"/><path d="M6 12h17v11H6z" fill="#185abd"/><path d="M0 6h13v13H0z" fill="#103f91"/><path d="M2 9l2 7 2.500-6L9 16l2-7" fill="none" stroke="#fff" stroke-width="1.500"/></svg></button>
            <button class="app-icon running" aria-label="Chrome"><svg width="24" height="24" viewBox="0 0 24 24"><circle cx="12" cy="12" r="11.500" fill="#ffcd40"/><path d="M12 12L2 6a11.500 11.500 0 0120 0z" fill="#ea4335"/><path d="M2 6a11.500 11.500 0 009 17.500L16 15z" fill="#34a853"/><circle cx="12" cy="12" r="5.500" fill="#fff"/><circle cx="12" cy="12" r="4.300" fill="#4285f4"/></svg></button>
            <button class="app-icon running lit" aria-label="Photos"><svg width="22" height="22" viewBox="0 0 22 22"><rect width="22" height="22" rx="2" fill="#1379cf"/><path d="M0 20l10-12 12 14H2z" fill="#9bdcff"/><path d="M10 8l12 14H8l-2-8z" fill="#4db4f0"/><circle cx="16" cy="5" r="2" fill="#fff"/></svg></button>
            <button class="app-icon running" aria-label="Monitor"><svg width="24" height="22" viewBox="0 0 24 22"><path d="M2 1h18v14H2z" fill="#8f9499"/><path d="M4 4h18v12H4z" fill="#e7ecef"/><path d="M6 12l3-4 3 3 3-5 4 6" fill="none" stroke="#2a84a0"/><path d="M8 16h10l1 4H7z" fill="#b8bcc0"/></svg></button>
            <button class="app-icon running current" aria-label="Power BI"><svg width="20" height="24" viewBox="0 0 20 24"><path d="M11 1h8v22h-8z" fill="#e6ad10"/><path d="M6 7h8v16H6z" fill="#f5c72a"/><path d="M1 13h8v10H1z" fill="#ffe27a"/></svg></button>
        </div>
        <div class="tray">
            <svg width="26" height="24" viewBox="0 0 26 24"><path d="M9 2c-4 5 0 12 7 11-3 5-13 4-14-3 0-4 3-7 7-8z" fill="#f6b73c"/><path d="M5 22a5 5 0 010-9c3-4 9-3 11 1 7 0 8 8 2 8z" fill="#a9cdf3"/><circle cx="19" cy="6" r="6" fill="#d9382f"/><text x="17" y="9" font-size="9" fill="#fff">1</text></svg>
            <span class="temp">23°C</span>
            <svg width="12" height="7" viewBox="0 0 12 7"><path d="M1 6l5-5 5 5" fill="none" stroke="#fff" stroke-width="1.300"/></svg>
            <svg width="14" height="16" viewBox="0 0 14 16"><path d="M2 4h8v8H2zM10 7l3-2v6l-3-2M4 1h5M4 15h5" fill="none" stroke="#fff" stroke-width="1.200"/></svg>
            <svg width="14" height="14" viewBox="0 0 14 14"><path d="M1 13A12 12 0 0113 1M4 13a9 9 0 019-9M7 13a6 6 0 016-6" fill="none" stroke="#fff"/><circle cx="11.500" cy="12" r="1.500" fill="#fff"/></svg>
            <svg width="16" height="12" viewBox="0 0 16 12"><path d="M5 4h9v6H3V7M15 6v2M1 1v3h4V1M3 4v3" fill="none" stroke="#fff" stroke-width="1.200"/><path d="M6 5h7v4H6z" fill="#fff"/></svg>
            <svg width="17" height="14" viewBox="0 0 17 14"><path d="M1 5h3l4-4v12L4 9H1zM10 5c1 1 1 3 0 4M12 3c2 2 2 6 0 8M14 1c3 3 3 9 0 12" fill="none" stroke="#fff"/></svg>
            <span>ENG</span>
            <time>2:48 AM<br>10/5/2025</time>
            <svg width="26" height="26" viewBox="0 0 26 26"><path d="M2 2h16v12H9l-4 4v-4H2z" fill="#fff"/><path d="M4 5h12M4 8h12M4 11h8" stroke="#222"/><circle cx="17" cy="17" r="7.500" fill="#222" stroke="#ddd"/><text x="14" y="21" font-size="11" fill="#fff">5</text></svg>
        </div>
    </footer>
</div>

<div class="activate"><strong>Activate Windows</strong><span>Go to Settings to activate Windows.</span></div>
<div class="watermark"><span lang="ar" dir="rtl">نفذلي</span><b>nafezly.com</b></div>

</body>
</html>
```
FILE: styles.css
```
* {
    box-sizing: border-box;
}

body {
    margin: 0;
    font-family: "Open Sans", "Noto Sans", sans-serif;
    font-size: 11px;
    color: #252423;
    background-color: #fff;
}

h1, h2, h3, h4, p, ul {
    margin: 0;
    padding: 0;
}

ul {
    list-style: none;
}

button, input {
    font: inherit;
    color: inherit;
    border: 0;
    padding: 0;
    background: none;
}

a {
    color: inherit;
    text-decoration: none;
}

svg {
    flex: none;
}

.symbols {
    position: absolute;
    width: 0;
    height: 0;
}

.app {
    display: flex;
    flex-direction: column;
    min-height: 100vh;
}

/* title bar */
.titlebar {
    display: flex;
    align-items: center;
    height: 34px;
    background-color: #3b3a39;
    color: #fff;
}

.titlebar-left {
    flex: 615 1 615px;
    display: flex;
    align-items: center;
    gap: 14px;
    padding-left: 16px;
}

.titlebar-left .tool {
    display: flex;
}

.file-name {
    padding-top: 4px;
    white-space: nowrap;
}

.file-name svg {
    margin: 0 0 3px 4px;
}

.title-search {
    flex: 400 1 400px;
    display: flex;
    align-items: center;
    gap: 12px;
    height: 24px;
    padding: 0 17px;
    border-radius: 2px;
    background-color: #d4d4d4;
}

.title-search input {
    flex: 1;
    font-size: 12px;
}

.title-search input::placeholder {
    color: #1b5e50;
}

.titlebar-right {
    flex: 351 1 351px;
    display: flex;
    align-items: center;
    justify-content: flex-end;
}

.sign-in {
    display: flex;
    align-items: center;
    gap: 10px;
    margin-right: 15px;
}

.win-button {
    width: 44px;
    height: 34px;
}

/* ribbon tabs */
.tabs {
    display: flex;
    height: 34px;
    background-color: #fbfbfb;
    font-size: 13px;
}

.tab {
    padding: 7px 16px 0;
    line-height: 18px;
}

.tab-file {
    padding: 7px 22px 0;
}

.tab.active {
    font-weight: 600;
}

.tab.active::after {
    content: "";
    display: block;
    height: 3px;
    margin-top: 3px;
    background-color: #117865;
}

.tab.context {
    color: #117865;
    font-weight: 600;
    background-color: #fff;
}

.share {
    display: flex;
    align-items: center;
    justify-content: center;
    gap: 6px;
    width: 84px;
    height: 24px;
    margin: 4px 6px 0 auto;
    border-radius: 4px;
    background-color: #117865;
    color: #fff;
    font-size: 12px;
}

/* ribbon */
.ribbon {
    position: relative;
    z-index: 2;
    display: flex;
    height: 92px;
    padding-top: 2px;
    background-color: #fbfbfb;
    box-shadow: 0 1px 4px rgba(0, 0, 0, 0.25);
}

.group {
    display: flex;
    flex-direction: column;
    height: 88px;
    border-right: 1px solid #d2d0ce;
}

.group h2 {
    font-size: 10px;
    font-weight: 400;
    line-height: 10px;
    text-align: center;
}

.group-items {
    display: grid;
    flex: 1;
    justify-content: start;
}

.group-clipboard .group-items {
    grid-template-columns: 40px 108px;
    padding: 0 4px 0 8px;
}

.group-data .group-items {
    grid-template-columns: 42px 54px 58px 42px 38px 58px 54px;
    padding: 0 8px 0 6px;
}

.group-queries .group-items {
    grid-template-columns: 60px 44px;
    padding: 0 6px;
}

.group-insert .group-items {
    grid-template-columns: 42px 40px 50px;
    padding: 0 8px 0 7px;
}

.group-calc .group-items {
    grid-template-columns: 76px 46px 52px;
    padding: 0 6px;
}

.group-single .group-items {
    grid-template-columns: 61px;
    padding: 0 6px;
}

.group-share .group-items {
    grid-template-columns: 46px;
    padding: 0 6px;
}

.group-copilot .group-items {
    grid-template-columns: 74px 42px;
    padding: 0 7px 0 8px;
}

.rb {
    display: flex;
    flex-direction: column;
    align-items: center;
    gap: 2px;
    padding-top: 6px;
    line-height: 16px;
    text-align: center;
}

.rb.disabled {
    color: #c2c0be;
}

.rb .fx {
    font-family: "Liberation Serif", serif;
    font-style: italic;
}

.ch {
    width: 8px;
    height: 8px;
    margin-left: 1px;
}

.rb-list {
    display: flex;
    flex-direction: column;
}

.rb-row {
    display: flex;
    align-items: center;
    gap: 4px;
    height: 24px;
    padding-left: 4px;
    white-space: nowrap;
}

.collapse {
    margin: auto 4px 4px auto;
}

/* main area */
.main {
    flex: 1;
    display: flex;
    background-color: #f3f2f1;
}

.views {
    width: 41px;
    border-right: 1px solid #e1dfdd;
}

.view {
    display: flex;
    align-items: center;
    justify-content: center;
    height: 40px;
    border-left: 3px solid transparent;
    border-right: 3px solid transparent;
}

.view.active {
    border-left-color: #117865;
}

.work {
    flex: 1;
    display: flex;
    flex-direction: column;
}

.stage {
    flex: 1;
    display: flex;
    background-color: #fff;
}

.canvas {
    flex: 1;
    padding: 0 20px 7px;
}

/* report page */
.page {
    border: 2px dotted #484644;
    border-top: 0;
    background-color: #d7e2b2;
    font-family: "Liberation Sans", Arial, sans-serif;
    color: #53333b;
}

.row {
    position: relative;
    display: flex;
}

.row-cards {
    height: 89px;
    padding: 3px 1px 4px 0;
    background-color: #fff;
}

.row-middle {
    height: 185px;
}

.row-bottom {
    height: 225px;
}

.report-title {
    flex: 107 1 107px;
    align-self: flex-start;
    font-size: 17px;
    font-style: italic;
    line-height: 19px;
    text-align: center;
    color: #64bb46;
}

.report-title span {
    font-size: 15px;
    font-style: normal;
}

.card {
    margin-left: 7px;
    border: 2px solid #bcc98a;
    background-color: #fff;
    text-align: center;
}

.report-title + .card {
    margin-left: 2px;
}

.card.joined {
    margin-left: 2px;
    border-left: 0;
}

.card h3 {
    padding-top: 6px;
    font-size: 15px;
    line-height: 20px;
    color: #74525a;
    white-space: nowrap;
}

.card p {
    font-size: 44px;
    line-height: 60px;
    color: #84686c;
}

.card .small {
    font-size: 38px;
    line-height: 54px;
}

.w-90 { flex: 90 1 90px; }
.w-118 { flex: 118 1 118px; }
.w-121 { flex: 121 1 121px; }
.w-133 { flex: 133 1 133px; }
.w-140 { flex: 140 1 140px; }
.w-144 { flex: 144 1 144px; }
.w-246 { flex: 246 1 246px; }
.w-260 { flex: 260 1 260px; }
.w-262 { flex: 262 1 262px; }
.w-281 { flex: 281 1 281px; }
.w-286 { flex: 286 1 286px; }
.w-295 { flex: 295 1 295px; }

.side {
    flex: 107 1 107px;
    border-top: 24px solid #fdfffa;
}

.visual {
    position: relative;
    min-width: 0;
    border: 1px solid #5cb83a;
    border-radius: 10px;
    background-color: #cfdff1;
}

.after-gap {
    margin-left: 10px;
}

.after-line {
    margin-left: 1px;
}

.row-bottom .visual + .visual {
    margin-left: 12px;
}

.visual h3 {
    font-size: 13px;
    line-height: 22px;
    text-align: center;
    white-space: nowrap;
}

.plot {
    display: block;
    width: 100%;
}

.plot text {
    fill: #53333b;
    text-anchor: middle;
}

.plot .left text {
    text-anchor: start;
}

.plot .bold {
    font-weight: 700;
}

.plot .t8 {
    font-size: 8px;
}

.plot .t10 {
    font-size: 10px;
}

.plot .t11 {
    font-size: 11px;
}

.plot .soft {
    fill: #7a5c62;
}

/* icons floating over a visual */
.visual-tools {
    position: absolute;
    z-index: 1;
    right: 0;
    bottom: 0;
    display: flex;
    gap: 3px;
}

.row-middle .visual-tools {
    right: 36px;
}

.visual-tools button {
    display: flex;
    align-items: center;
    justify-content: center;
    width: 25px;
    height: 23px;
    background-color: #fff;
}

/* bar charts */
.bars {
    display: flex;
    height: 172px;
    margin: 8px 6px 0;
}

.bars.planned {
    height: 154px;
}

.y-title {
    width: 12px;
    writing-mode: vertical-rl;
    transform: rotate(180deg);
    text-align: center;
}

.bar-list {
    flex: 1;
    display: flex;
    flex-direction: column;
    font-weight: 700;
}

.bar-list li {
    flex: 1;
    display: grid;
    grid-template-columns: 72px 1fr;
    column-gap: 6px;
    align-items: center;
    line-height: 11px;
}

.bar-list span {
    text-align: right;
}

.bar-list i {
    display: flex;
    height: 11px;
    background-color: #84bbf7;
    font-style: normal;
}

.bar-list b {
    margin-left: calc(100% + 5px);
}

.bar-list .over {
    margin-left: calc(100% - 3px);
}

.bar-list .on {
    background-color: #118dff;
}

.scroll {
    width: 5px;
    background-color: #d8dfe6;
}

.scroll-thumb {
    display: block;
    height: 65%;
    border-radius: 3px;
    background-color: #a3a8b0;
}

.planned .scroll-thumb {
    height: 54%;
}

.x-title {
    padding-left: 80px;
    font-size: 11px;
    font-weight: 700;
    line-height: 16px;
    text-align: center;
    color: #6a4038;
}

.ticks {
    display: flex;
    gap: 70px;
    padding: 7px 0 0 90px;
    line-height: 12px;
}

/* selection frame */
.visual.selected {
    border-color: #cfdff1;
    border-radius: 0;
}

.handle, .grip {
    position: absolute;
    border: 0 solid #919191;
}

.handle {
    width: 8px;
    height: 8px;
}

.tl { top: -1px; left: -1px; border-width: 3px 0 0 3px; }
.tr { top: -1px; right: -1px; border-width: 3px 3px 0 0; }
.bl { bottom: -1px; left: -1px; border-width: 0 0 3px 3px; }
.br { bottom: -1px; right: -1px; border-width: 0 3px 3px 0; }

.grip.top, .grip.bottom {
    left: 48%;
    width: 12px;
    border-top-width: 3px;
}

.grip.top { top: -1px; }
.grip.bottom { bottom: -1px; }

.grip.left-side, .grip.right-side {
    top: 48%;
    height: 12px;
    border-left-width: 3px;
}

.grip.left-side { left: -1px; }
.grip.right-side { right: -1px; }

/* filters strip */
.filters {
    display: flex;
    flex-direction: column;
    align-items: center;
    gap: 13px;
    width: 33px;
    padding-top: 12px;
    border-left: 1px solid #b3b0ad;
}

.filters h2 {
    margin-top: -5px;
    font-size: 14px;
    font-weight: 600;
    writing-mode: vertical-rl;
}

/* page tabs */
.pages {
    display: flex;
    height: 35px;
}

.layout {
    width: 44px;
    border-bottom: 3px solid transparent;
}

.layout.on {
    width: 24px;
    height: 31px;
    margin: 0 11px 0 10px;
    border-bottom-color: #117865;
}

.arrow {
    width: 19px;
}

.page-tab {
    width: 77px;
    padding-top: 11px;
    border-left: 1px solid #c8c6c4;
    background-color: #fff;
    line-height: 15px;
    text-align: center;
}

.page-tab.current {
    border-bottom: 4px solid #117865;
    font-weight: 600;
}

.add-page {
    width: 40px;
    background-color: #117865;
}

/* right panes */
.pane {
    width: 181px;
    border-left: 1px solid #e1dfdd;
}

.pane header {
    display: flex;
    align-items: center;
    justify-content: space-between;
    height: 38px;
    padding: 0 8px;
}

.pane header h2 {
    font-size: 15px;
    font-weight: 600;
}

.viz h3 {
    padding-left: 8px;
    font-size: 11px;
    font-weight: 600;
    line-height: 16px;
}

.modes {
    display: flex;
    justify-content: space-between;
    padding: 3px 8px 0;
}

.mode {
    display: flex;
    align-items: center;
    justify-content: center;
    width: 32px;
    height: 32px;
}

.mode.on {
    background-color: #d2d0ce;
}

.notch {
    display: block;
    margin-top: 4px;
    width: 100%;
}

.viz-grid {
    display: grid;
    grid-template-columns: repeat(6, 28px);
    grid-auto-rows: 28px;
    padding: 7px 0 0 6px;
}

.viz-grid button {
    display: flex;
    align-items: center;
    justify-content: center;
}

.viz-grid .picked {
    margin: 2px;
    border: 1px solid #252423;
}

.viz-grid svg {
    width: 18px;
    height: 18px;
    overflow: visible;
}

.viz-grid .d { fill: none; stroke: #3b3a39; }
.viz-grid .w { fill: #fff; stroke: #3b3a39; }
.viz-grid .b { fill: #8cc4f5; stroke: #0f6cbd; }
.viz-grid .g { fill: #b8b6b4; stroke: #605e5c; }
.viz-grid .o { fill: #ffc27a; stroke: #d8760f; }
.viz-grid .l { fill: none; stroke: #0f6cbd; }

.more {
    display: flex;
    padding: 10px 12px;
}

.wells {
    display: flex;
    border-top: 1px solid #e1dfdd;
}

.well-list {
    flex: 1;
    padding: 15px 0 0 4px;
}

.wells h4 {
    padding-left: 8px;
    font-weight: 400;
    line-height: 17px;
}

.well {
    height: 37px;
    margin: 5px 0 10px;
    padding: 3px 2px;
    border: 1px dashed #c8c6c4;
    background-color: #fff;
}

.well.empty {
    height: 28px;
    padding: 5px 10px;
    line-height: 16px;
}

.pill {
    display: flex;
    align-items: center;
    gap: 6px;
    height: 23px;
    padding: 0 4px;
    border: 1px solid #c8c6c4;
    border-radius: 2px;
    background-color: #edebe9;
    white-space: nowrap;
}

.pill svg:first-of-type {
    margin-left: auto;
}

.wells-thumb {
    width: 6px;
    height: 88px;
    margin-top: 2px;
    border-radius: 3px;
    background-color: #8a8886;
}

.data-search {
    display: flex;
    align-items: center;
    gap: 6px;
    height: 24px;
    margin: 7px 4px 9px;
    padding: 0 12px;
    border: 1px solid #d2d0ce;
    border-bottom-color: #605e5c;
    border-radius: 4px;
    background-color: #fff;
}

.data-search input {
    width: 100%;
    font-size: 12px;
}

.data-search input::placeholder {
    color: #605e5c;
}

.fields li {
    position: relative;
    display: flex;
    align-items: center;
    gap: 6px;
    height: 24px;
    padding-left: 14px;
}

.fields .badge {
    position: absolute;
    left: 35px;
    top: 11px;
}

/* status bar */
.status {
    display: flex;
    align-items: center;
    justify-content: space-between;
    height: 24px;
    padding: 0 4px;
    border-top: 1px solid #e1dfdd;
    background-color: #f3f2f1;
    color: #3b3a39;
}

.zoom {
    display: flex;
    align-items: center;
    gap: 6px;
}

.zoom input {
    width: 104px;
    height: 11px;
    margin: 0;
    appearance: none;
    background: linear-gradient(#605e5c, #605e5c) center / 100% 1px no-repeat;
}

.zoom input::-webkit-slider-thumb {
    appearance: none;
    width: 4px;
    height: 11px;
    background-color: #484644;
}

.zoom .percent {
    padding: 0 20px 0 6px;
}

.zoom a {
    padding-left: 8px;
}

/* taskbar */
.taskbar {
    display: flex;
    align-items: stretch;
    height: 41px;
    background-color: #222326;
    color: #fff;
}

.start {
    width: 48px;
}

.task-search {
    display: flex;
    align-items: center;
    gap: 12px;
    width: 288px;
    padding: 0 10px 0 12px;
    background-color: #f0f0f0;
    color: #3b3a39;
}

.task-search input {
    flex: 1;
    min-width: 0;
    font-size: 14px;
}

.task-search input::placeholder {
    color: #3b3a39;
}

.apps {
    display: flex;
}

.app-icon {
    display: flex;
    align-items: center;
    justify-content: center;
    width: 49px;
    border-bottom: 3px solid transparent;
}

.app-icon.running {
    border-image: linear-gradient(to right, transparent 10%, #76b9ed 10%, #76b9ed 90%, transparent 90%) 1;
    border-width: 0 0 3px;
    border-style: solid;
}

.app-icon.lit {
    background-color: #3a3b3e;
}

.app-icon.current {
    background-color: #58585a;
}

.tray {
    display: flex;
    align-items: center;
    gap: 9px;
    margin-left: auto;
    padding-right: 19px;
}

.tray .temp {
    margin: 0 18px 0 -2px;
    font-size: 13px;
}

.tray time {
    margin: 0 6px 0 4px;
    line-height: 18px;
    text-align: center;
}

/* overlays */
.activate {
    position: absolute;
    z-index: 3;
    left: 1073px;
    top: 651px;
    display: flex;
    flex-direction: column;
    color: rgba(120, 120, 120, 0.55);
    font-size: 14px;
    line-height: 23px;
    pointer-events: none;
}

.activate strong {
    font-size: 19px;
    font-weight: 400;
}

.watermark {
    position: absolute;
    z-index: 3;
    left: 600px;
    top: 666px;
    width: 166px;
    display: flex;
    flex-direction: column;
    align-items: center;
    pointer-events: none;
}

.watermark span {
    font-family: "DejaVu Sans", sans-serif;
    font-size: 56px;
    font-weight: 700;
    line-height: 72px;
    color: rgba(205, 205, 210, 0.7);
}

.watermark b {
    font-family: Lato, sans-serif;
    font-size: 29px;
    line-height: 28px;
    color: rgba(225, 225, 230, 0.9);
}
```
